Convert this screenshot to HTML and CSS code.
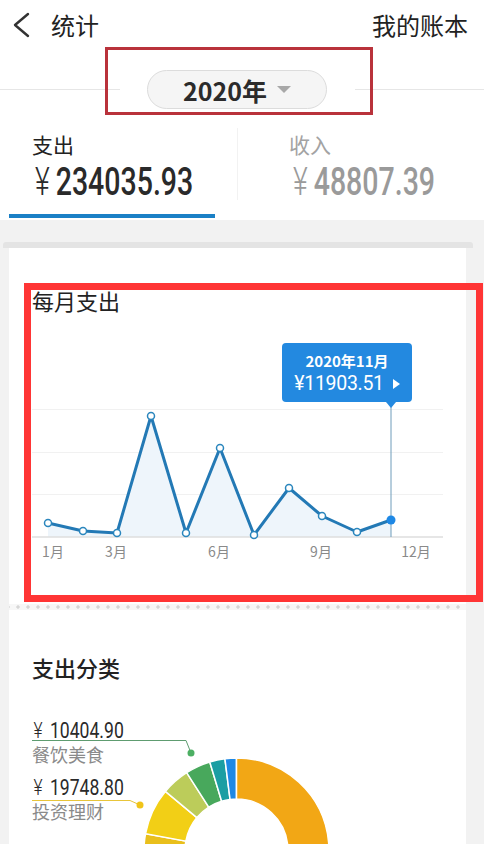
FILE: index.html
```html
<!DOCTYPE html>
<html lang="zh-CN">
<head>
    <meta charset="UTF-8">
    <meta name="viewport" content="width=device-width, initial-scale=1.0">
    <title>统计</title>
    <link rel="stylesheet" href="styles.css">
</head>
<body>
<div class="page">
    <!-- top bar -->
    <div class="topbar">
        <svg class="back" viewBox="0 0 20 26" width="20" height="26">
            <path d="M17 2 L4 13 L17 24" fill="none" stroke="#333" stroke-width="2.4" stroke-linecap="round" stroke-linejoin="round"/>
        </svg>
        <div class="title">统计</div>
        <div class="book">我的账本</div>
    </div>

    <!-- year picker -->
    <div class="year-row">
        <div class="rule rule-left"></div>
        <div class="year-pill">
            <span class="year-text">2020年</span>
            <span class="caret"></span>
        </div>
        <div class="rule rule-right"></div>
    </div>

    <!-- expense / income tabs -->
    <div class="tabs">
        <div class="tab tab-active">
            <div class="tab-label">支出</div>
            <div class="tab-amount"><span class="yen">¥</span>234035.93</div>
            <div class="tab-line"></div>
        </div>
        <div class="tab-divider"></div>
        <div class="tab tab-income">
            <div class="tab-label">收入</div>
            <div class="tab-amount"><span class="yen">¥</span>48807.39</div>
        </div>
    </div>

    <div class="stack"></div>

    <!-- monthly chart -->
    <div class="card card-month">
        <div class="card-title">每月支出</div>
        <div class="chart-wrap">
            <svg class="chart" viewBox="0 0 457 250" width="457" height="250">
                <g stroke="#f1f1f1" stroke-width="1">
                    <line x1="23" y1="89.5" x2="434" y2="89.5"/>
                    <line x1="23" y1="132.5" x2="434" y2="132.5"/>
                    <line x1="23" y1="174.5" x2="434" y2="174.5"/>
                </g>
                <polygon points="39,203 74,211 108,213 142,96 177,213 211,128 245,215 280,168 313,196 348,212 382,200 382,217 39,217" fill="#eef5fb"/>
                <line x1="23" y1="217" x2="434" y2="217" stroke="#dedede" stroke-width="1.5"/>
                <line x1="382" y1="83" x2="382" y2="217" stroke="#6f9cba" stroke-width="1"/>
                <polyline points="39,203 74,211 108,213 142,96 177,213 211,128 245,215 280,168 313,196 348,212 382,200" fill="none" stroke="#2379b5" stroke-width="3" stroke-linejoin="round"/>
                <g fill="#fff" stroke="#2a86bd" stroke-width="1.5">
                    <circle cx="39" cy="203" r="3.5"/>
                    <circle cx="74" cy="211" r="3.5"/>
                    <circle cx="108" cy="213" r="3.5"/>
                    <circle cx="142" cy="96" r="3.5"/>
                    <circle cx="177" cy="213" r="3.5"/>
                    <circle cx="211" cy="128" r="3.5"/>
                    <circle cx="245" cy="215" r="3.5"/>
                    <circle cx="280" cy="168" r="3.5"/>
                    <circle cx="313" cy="196" r="3.5"/>
                    <circle cx="348" cy="212" r="3.5"/>
                </g>
                <circle cx="382" cy="200" r="4.5" fill="#1e88e5"/>
                <g class="axis-label" text-anchor="middle">
                    <text x="44" y="237">1月</text>
                    <text x="107" y="237">3月</text>
                    <text x="210" y="237">6月</text>
                    <text x="312" y="237">9月</text>
                    <text x="407" y="237">12月</text>
                </g>
            </svg>
            <div class="tooltip">
                <div class="tip-date">2020年11月</div>
                <div class="tip-value"><span>¥11903.51</span><span class="tip-arrow"></span></div>
            </div>
        </div>
    </div>

    <div class="perf"></div>

    <!-- category chart -->
    <div class="card card-cat">
        <svg class="donut" viewBox="0 0 457 300" width="457" height="300">
            <g stroke="#fff" stroke-width="1.5">
                <path d="M136.40 256.56 A92.5 92.5 0 0 1 136.54 223.65 L176.86 231.12 A51.5 51.5 0 0 0 176.78 249.44 Z" fill="#e9bf1c"/>
                <path d="M136.54 223.65 A92.5 92.5 0 0 1 156.33 181.41 L187.88 207.60 A51.5 51.5 0 0 0 176.86 231.12 Z" fill="#f2cf16"/>
                <path d="M156.33 181.41 A92.5 92.5 0 0 1 177.66 162.57 L199.75 197.11 A51.5 51.5 0 0 0 187.88 207.60 Z" fill="#bccc5a"/>
                <path d="M177.66 162.57 A92.5 92.5 0 0 1 200.77 151.95 L212.62 191.20 A51.5 51.5 0 0 0 199.75 197.11 Z" fill="#48a85c"/>
                <path d="M200.77 151.95 A92.5 92.5 0 0 1 215.91 148.73 L221.05 189.41 A51.5 51.5 0 0 0 212.62 191.20 Z" fill="#1b9ea3"/>
                <path d="M215.91 148.73 A92.5 92.5 0 0 1 227.5 148 L227.5 189 A51.5 51.5 0 0 0 221.05 189.41 Z" fill="#1e88e5"/>
                <path d="M227.5 148 A92.5 92.5 0 0 1 243.56 331.59 L236.44 291.22 A51.5 51.5 0 0 0 227.5 189 Z" fill="#f2a715"/>
            </g>
            <path d="M23 130.5 H177 L182 143" fill="none" stroke="#5e9c70" stroke-width="1"/>
            <circle cx="182" cy="143" r="3.5" fill="#4caf63"/>
            <path d="M23 190.5 H121 L131 195" fill="none" stroke="#e8c53a" stroke-width="1"/>
            <circle cx="131" cy="195" r="3.5" fill="#f0c419"/>
        </svg>
        <div class="card-title cat-title">支出分类</div>
        <div class="cat-list">
            <div class="cat-item">
                <div class="cat-value"><span class="yen">¥</span>10404.90</div>
                <div class="cat-name">餐饮美食</div>
            </div>
            <div class="cat-item">
                <div class="cat-value"><span class="yen">¥</span>19748.80</div>
                <div class="cat-name">投资理财</div>
            </div>
        </div>
    </div>

    <!-- annotation frames drawn over the screenshot -->
    <div class="mark mark-year"></div>
    <div class="mark mark-chart"></div>
</div>
</body>
</html>
```

FILE: styles.css
```css
* {
    box-sizing: border-box;
}
body {
    margin: 0;
    background: #f2f2f2;
    font-family: "Noto Sans CJK SC", "Noto Sans", sans-serif;
    color: #222;
}
.page {
    position: relative;
    width: 484px;
    height: 844px;
    overflow: hidden;
}

/* top bar */
.topbar {
    height: 50px;
    background: #fff;
    display: flex;
    align-items: center;
    padding: 0 16px 0 11px;
}
.back {
    display: block;
}
.title {
    flex: 1;
    margin-left: 20px;
    font-size: 24px;
    line-height: 30px;
}
.book {
    font-size: 24px;
    line-height: 30px;
}

/* year picker */
.year-row {
    background: #fff;
    display: flex;
    align-items: center;
    padding: 20px 0 11px;
}
.rule {
    height: 1px;
    background: #e6e6e6;
}
.rule-left {
    width: 120px;
}
.rule-right {
    flex: 1;
}
.year-pill {
    width: 180px;
    height: 39px;
    margin: 0 28px 0 27px;
    border: 1px solid #dcdcdc;
    border-radius: 20px;
    background: #f5f5f5;
    display: flex;
    align-items: center;
    justify-content: center;
    gap: 10px;
}
.year-text {
    font-size: 25px;
    font-weight: 700;
    line-height: 30px;
    color: #2b2b2b;
}
.caret {
    width: 0;
    height: 0;
    border-left: 7px solid transparent;
    border-right: 7px solid transparent;
    border-top: 7px solid #a8a8a8;
}

/* tabs */
.tabs {
    background: #fff;
    display: flex;
    height: 100px;
}
.tab {
    padding-top: 11px;
}
.tab-active {
    width: 237px;
}
.tab-active .tab-label {
    margin-left: 32px;
}
.tab-active .tab-amount {
    margin-left: 35px;
}
.tab-label {
    font-size: 21px;
    line-height: 26px;
}
.tab-amount {
    margin-top: 5px;
    font-family: Roboto, "Liberation Sans", sans-serif;
    font-size: 38px;
    font-weight: 500;
    line-height: 40px;
    white-space: nowrap;
    transform: scaleX(0.75);
    transform-origin: left center;
    color: #2a2a2a;
}
.tab-amount .yen {
    font-weight: 300;
    margin-right: 8px;
}
.tab-line {
    margin: 12px 0 0 9px;
    width: 206px;
    height: 4px;
    background: #1a80c6;
}
.tab-divider {
    width: 1px;
    margin: 8px 0 20px;
    background: #f2f2f2;
}
.tab-income {
    flex: 1;
}
.tab-income .tab-label {
    margin-left: 51px;
    color: #a3a3a3;
}
.tab-income .tab-amount {
    margin-left: 55px;
    color: #9a9a9a;
}

/* stacked card edge */
.stack {
    margin: 22px 11px 0 3px;
    height: 6px;
    background: #e4e4e4;
    border-radius: 3px 3px 0 0;
}

/* cards */
.card {
    margin-left: 9px;
    width: 457px;
    background: #fff;
}
.card-title {
    padding: 40px 0 0 23px;
    font-size: 22px;
    line-height: 24px;
}
.card-month {
    padding-bottom: 34px;
}
.chart-wrap {
    position: relative;
    height: 250px;
    margin-top: 8px;
}
.chart {
    display: block;
}
.axis-label {
    font-family: "Noto Sans CJK SC", sans-serif;
    font-size: 14px;
    fill: #8a8a8a;
}
.tooltip {
    position: absolute;
    left: 273px;
    top: 23px;
    width: 130px;
    height: 59px;
    padding-top: 8px;
    background: #2389e0;
    border-radius: 4px;
    color: #fff;
    text-align: center;
}
.tooltip::after {
    content: "";
    position: absolute;
    left: 104px;
    bottom: -6px;
    border-left: 5px solid transparent;
    border-right: 5px solid transparent;
    border-top: 6px solid #2389e0;
}
.tip-date {
    font-size: 15px;
    font-weight: 700;
    line-height: 20px;
}
.tip-value {
    display: flex;
    align-items: center;
    justify-content: center;
    gap: 9px;
    font-family: Roboto, "Liberation Sans", sans-serif;
    font-size: 19.5px;
    letter-spacing: -0.3px;
    line-height: 26px;
}
.tip-arrow {
    width: 0;
    height: 0;
    border-top: 5px solid transparent;
    border-bottom: 5px solid transparent;
    border-left: 7px solid #fff;
}

/* perforated divider between cards */
.perf {
    margin-left: 9px;
    width: 457px;
    height: 6px;
    background-color: #f7f7f7;
    background-image: radial-gradient(circle, #d6d6d6 1.4px, transparent 1.9px);
    background-size: 10px 6px;
    background-position: 4px 0;
}

/* category card */
.card-cat {
    position: relative;
    height: 300px;
}
.donut {
    position: absolute;
    left: 0;
    top: 0;
}
.cat-title {
    position: relative;
    padding-top: 45px;
    font-weight: 500;
}
.cat-list {
    position: relative;
    margin-top: 41px;
    padding-left: 23px;
}
.cat-item + .cat-item {
    margin-top: 13px;
}
.cat-value {
    font-family: Roboto, "Liberation Sans", sans-serif;
    font-size: 22px;
    line-height: 22px;
    color: #2a2a2a;
    white-space: nowrap;
    transform: scaleX(0.8);
    transform-origin: left center;
    padding-left: 2px;
}
.cat-value .yen {
    font-weight: 300;
    margin-right: 9px;
}
.cat-name {
    margin-top: 2px;
    font-size: 18px;
    line-height: 20px;
    color: #8a8a8a;
}

/* annotation frames */
.mark {
    position: absolute;
}
.mark-year {
    left: 105px;
    top: 47px;
    width: 268px;
    height: 68px;
    border: 3px solid #b9323b;
}
.mark-chart {
    left: 24px;
    top: 283px;
    width: 459px;
    height: 319px;
    border: 7px solid #ff3535;
}
```
